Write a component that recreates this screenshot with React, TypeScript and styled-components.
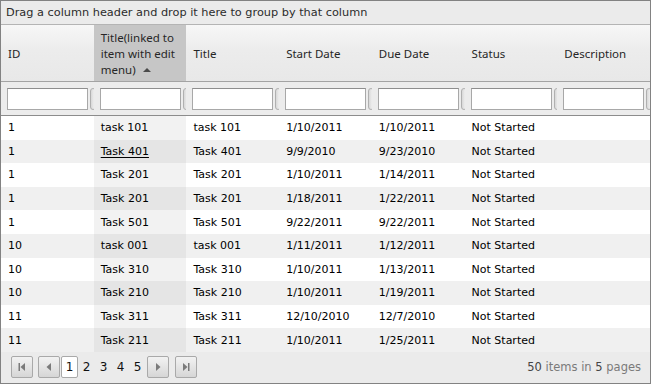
import React from "react";
import styled, { createGlobalStyle } from "styled-components";

const Global = createGlobalStyle`
  html, body { margin: 0; padding: 0; background: #fff; }
  * { box-sizing: border-box; }
`;

const GridFrame = styled.div`
  width: 651px;
  height: 384px;
  border: 1px solid #828282;
  display: flex;
  flex-direction: column;
  font-family: "DejaVu Sans", Verdana, sans-serif;
  font-size: 11px;
  color: #000;
  overflow: hidden;
`;

const GroupPanel = styled.div`
  height: 24px;
  flex: none;
  background: #ebebeb;
  border-bottom: 1px solid #b4b4b4;
  padding: 0 5px;
  display: flex;
  align-items: center;
  font-size: 11.3px;
  color: #2b2b2b;
`;

const Row = styled.div`
  display: grid;
  grid-template-columns: repeat(7, 1fr);
  flex: none;
`;

const HeaderRow = styled(Row)`
  height: 57px;
  border-bottom: 1px solid #a3a3a3;
  background: linear-gradient(#f7f7f7 0%, #ececec 45%, #e8e8e8 100%);
`;

const HeaderCell = styled.div<{ $sorted?: boolean }>`
  padding: 1px 7px 0 7px;
  display: flex;
  align-items: center;
  font-family: "Noto Sans", "Open Sans", sans-serif;
  font-size: 11.5px;
  line-height: 16px;
  color: #262626;
  background: ${(p) => (p.$sorted ? "#c6c6c6" : "transparent")};
`;

const SortArrow = styled.span`
  display: inline-block;
  width: 0;
  height: 0;
  margin-left: 7px;
  vertical-align: 2px;
  border-left: 4px solid transparent;
  border-right: 4px solid transparent;
  border-bottom: 4px solid #4a4a4a;
`;

const FilterRow = styled(Row)`
  height: 34px;
  background: #ececec;
  border-bottom: 1px solid #8c8c8c;
`;

const FilterCell = styled.div`
  display: flex;
  align-items: center;
  padding-left: 6px;
  gap: 2px;
  overflow: hidden;
`;

const FilterInput = styled.div`
  width: 81px;
  height: 22px;
  flex: none;
  background: #fff;
  border: 1px solid #a8a8a8;
  border-top-color: #8e8e8e;
`;

const FilterButton = styled.div`
  width: 6px;
  height: 22px;
  flex: none;
  border: 1px solid #b0b0b0;
  border-radius: 3px;
  background: linear-gradient(90deg, #d8d8d8, #f4f4f4);
`;

const Body = styled.div`
  flex: none;
  display: flex;
  flex-direction: column;
`;

const DataRow = styled(Row)<{ $alt?: boolean }>`
  height: 23.6px;
  background: ${(p) => (p.$alt ? "#f0f0f0" : "#fff")};
`;

const Cell = styled.div<{ $sorted?: boolean; $alt?: boolean }>`
  padding-left: 7px;
  display: flex;
  align-items: center;
  white-space: nowrap;
  overflow: hidden;
  background: ${(p) =>
    p.$sorted ? (p.$alt ? "#e5e5e5" : "#f2f2f2") : "transparent"};
`;

const Link = styled.span`
  text-decoration: underline;
  text-underline-offset: 2px;
`;

const Pager = styled.div`
  flex: 1;
  background: #ebebeb;
  display: flex;
  align-items: center;
  padding: 0 9px 1px 10px;
`;

const PagerButton = styled.div<{ $gap?: number }>`
  width: 22px;
  height: 22px;
  margin-right: ${(p) => p.$gap ?? 0}px;
  border: 1px solid #a9a9a9;
  border-radius: 2px;
  background: linear-gradient(#f2f2f2, #d6d6d6);
  display: flex;
  align-items: center;
  justify-content: center;
`;

const Pages = styled.div`
  display: flex;
  align-items: center;
  margin: 0 1px 0 1px;
`;

const PageNumber = styled.div<{ $current?: boolean }>`
  width: 17px;
  height: 22px;
  display: flex;
  align-items: center;
  justify-content: center;
  font-size: 12px;
  color: #111;
  background: ${(p) => (p.$current ? "#fff" : "transparent")};
  border: 1px solid ${(p) => (p.$current ? "#a9a9a9" : "transparent")};
  border-radius: 2px;
`;

const PagerInfo = styled.div`
  margin-left: auto;
  color: #7a7a7a;
  font-size: 11.5px;
  b {
    font-weight: normal;
    color: #444;
  }
`;

const Icon = ({ kind }: { kind: "first" | "prev" | "next" | "last" }) => {
  const c = "#7a7a7a";
  return (
    <svg width="10" height="10" viewBox="0 0 10 10">
      {kind === "first" && (
        <>
          <rect x="1.5" y="1" width="1.5" height="8" fill={c} />
          <path d="M8 1 L3.5 5 L8 9 Z" fill={c} />
        </>
      )}
      {kind === "prev" && <path d="M7 1 L2.5 5 L7 9 Z" fill={c} />}
      {kind === "next" && <path d="M3 1 L7.5 5 L3 9 Z" fill={c} />}
      {kind === "last" && (
        <>
          <path d="M2 1 L6.5 5 L2 9 Z" fill={c} />
          <rect x="7" y="1" width="1.5" height="8" fill={c} />
        </>
      )}
    </svg>
  );
};

const rows = [
  ["1", "task 101", "task 101", "1/10/2011", "1/10/2011", "Not Started"],
  ["1", "Task 401", "Task 401", "9/9/2010", "9/23/2010", "Not Started"],
  ["1", "Task 201", "Task 201", "1/10/2011", "1/14/2011", "Not Started"],
  ["1", "Task 201", "Task 201", "1/18/2011", "1/22/2011", "Not Started"],
  ["1", "Task 501", "Task 501", "9/22/2011", "9/22/2011", "Not Started"],
  ["10", "task 001", "task 001", "1/11/2011", "1/12/2011", "Not Started"],
  ["10", "Task 310", "Task 310", "1/10/2011", "1/13/2011", "Not Started"],
  ["10", "Task 210", "Task 210", "1/10/2011", "1/19/2011", "Not Started"],
  ["11", "Task 311", "Task 311", "12/10/2010", "12/7/2010", "Not Started"],
  ["11", "Task 211", "Task 211", "1/10/2011", "1/25/2011", "Not Started"],
];

export default function App() {
  return (
    <>
      <Global />
      <GridFrame>
        <GroupPanel>Drag a column header and drop it here to group by that column</GroupPanel>
        <HeaderRow>
          <HeaderCell>ID</HeaderCell>
          <HeaderCell $sorted>
            <span>
              Title(linked to item with edit menu)
              <SortArrow />
            </span>
          </HeaderCell>
          <HeaderCell>Title</HeaderCell>
          <HeaderCell>Start Date</HeaderCell>
          <HeaderCell>Due Date</HeaderCell>
          <HeaderCell>Status</HeaderCell>
          <HeaderCell>Description</HeaderCell>
        </HeaderRow>
        <FilterRow>
          {Array.from({ length: 7 }).map((_, i) => (
            <FilterCell key={i}>
              <FilterInput />
              <FilterButton />
            </FilterCell>
          ))}
        </FilterRow>
        <Body>
          {rows.map((r, i) => {
            const alt = i % 2 === 1;
            return (
              <DataRow key={i} $alt={alt}>
                <Cell>{r[0]}</Cell>
                <Cell $sorted $alt={alt}>
                  {i === 1 ? <Link>{r[1]}</Link> : r[1]}
                </Cell>
                <Cell>{r[2]}</Cell>
                <Cell>{r[3]}</Cell>
                <Cell>{r[4]}</Cell>
                <Cell>{r[5]}</Cell>
                <Cell />
              </DataRow>
            );
          })}
        </Body>
        <Pager>
          <PagerButton $gap={5}>
            <Icon kind="first" />
          </PagerButton>
          <PagerButton>
            <Icon kind="prev" />
          </PagerButton>
          <Pages>
            {[1, 2, 3, 4, 5].map((n) => (
              <PageNumber key={n} $current={n === 1}>
                {n}
              </PageNumber>
            ))}
          </Pages>
          <PagerButton $gap={6}>
            <Icon kind="next" />
          </PagerButton>
          <PagerButton>
            <Icon kind="last" />
          </PagerButton>
          <PagerInfo>
            <b>50</b> items in <b>5</b> pages
          </PagerInfo>
        </Pager>
      </GridFrame>
    </>
  );
}
